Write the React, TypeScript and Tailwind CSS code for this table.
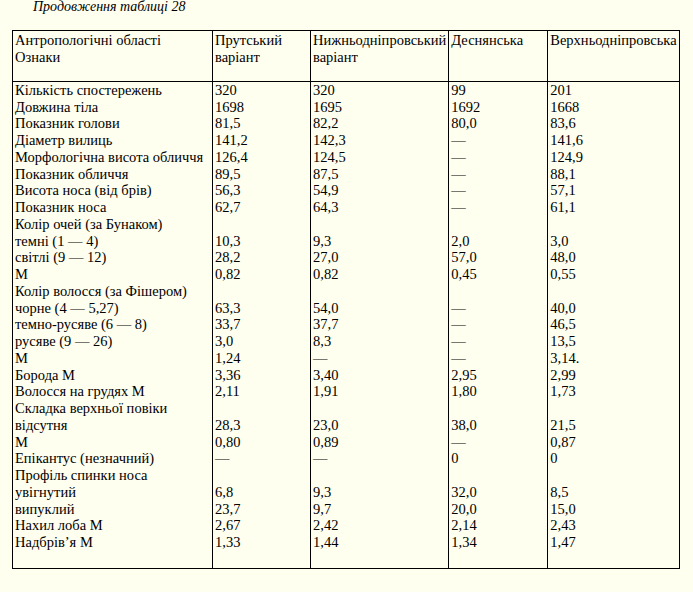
import React from "react";

const headers = [
  ["Антропологічні області", "Ознаки"],
  ["Прутський", "варіант"],
  ["Нижньодніпровський", "варіант"],
  ["Деснянська"],
  ["Верхньодніпровська"],
];

// one line per trait; "" = empty line in that column
const rows: string[][] = [
  ["Кількість спостережень", "320", "320", "99", "201"],
  ["Довжина тіла", "1698", "1695", "1692", "1668"],
  ["Показник голови", "81,5", "82,2", "80,0", "83,6"],
  ["Діаметр вилиць", "141,2", "142,3", "—", "141,6"],
  ["Морфологічна висота обличчя", "126,4", "124,5", "—", "124,9"],
  ["Показник обличчя", "89,5", "87,5", "—", "88,1"],
  ["Висота носа (від брів)", "56,3", "54,9", "—", "57,1"],
  ["Показник носа", "62,7", "64,3", "—", "61,1"],
  ["Колір очей (за Бунаком)", "", "", "", ""],
  ["темні (1 — 4)", "10,3", "9,3", "2,0", "3,0"],
  ["світлі (9 — 12)", "28,2", "27,0", "57,0", "48,0"],
  ["М", "0,82", "0,82", "0,45", "0,55"],
  ["Колір волосся (за Фішером)", "", "", "", ""],
  ["чорне (4 — 5,27)", "63,3", "54,0", "—", "40,0"],
  ["темно-русяве (6 — 8)", "33,7", "37,7", "—", "46,5"],
  ["русяве (9 — 26)", "3,0", "8,3", "—", "13,5"],
  ["М", "1,24", "—", "—", "3,14."],
  ["Борода М", "3,36", "3,40", "2,95", "2,99"],
  ["Волосся на грудях М", "2,11", "1,91", "1,80", "1,73"],
  ["Складка верхньої повіки", "", "", "", ""],
  ["відсутня", "28,3", "23,0", "38,0", "21,5"],
  ["М", "0,80", "0,89", "—", "0,87"],
  ["Епікантус (незначний)", "—", "—", "0", "0"],
  ["Профіль спинки носа", "", "", "", ""],
  ["увігнутий", "6,8", "9,3", "32,0", "8,5"],
  ["випуклий", "23,7", "9,7", "20,0", "15,0"],
  ["Нахил лоба М", "2,67", "2,42", "2,14", "2,43"],
  ["Надбрів’я М", "1,33", "1,44", "1,34", "1,47"],
];

const widths = ["w-[200px]", "w-[98px]", "w-[138px]", "w-[99px]", "w-[131px]"];

export default function App() {
  return (
    <div className="min-h-[593px] bg-[#fffff0] text-black [font-family:'Liberation_Serif',serif] text-[14.5px] leading-[16.75px]">
      <p className="pl-[33px] -mt-[1px] italic text-[14px]">Продовження таблиці 28</p>
      <table className="ml-[12px] mt-[14px] border-collapse table-fixed">
        <thead>
          <tr>
            {headers.map((h, i) => (
              <th
                key={i}
                className={`${widths[i]} h-[51px] border border-black px-[2px] pt-[1px] align-top text-left font-normal`}
              >
                {h.map((line) => (
                  <div key={line} className="whitespace-nowrap">{line}</div>
                ))}
              </th>
            ))}
          </tr>
        </thead>
        <tbody>
          <tr>
            {widths.map((w, c) => (
              <td key={c} className={`${w} border border-black px-[2px] pt-[0px] pb-[17px] align-top`}>
                {rows.map((r, i) => (
                  <div key={i} className="h-[16.75px] whitespace-nowrap">
                    {r[c]}
                  </div>
                ))}
              </td>
            ))}
          </tr>
        </tbody>
      </table>
    </div>
  );
}
